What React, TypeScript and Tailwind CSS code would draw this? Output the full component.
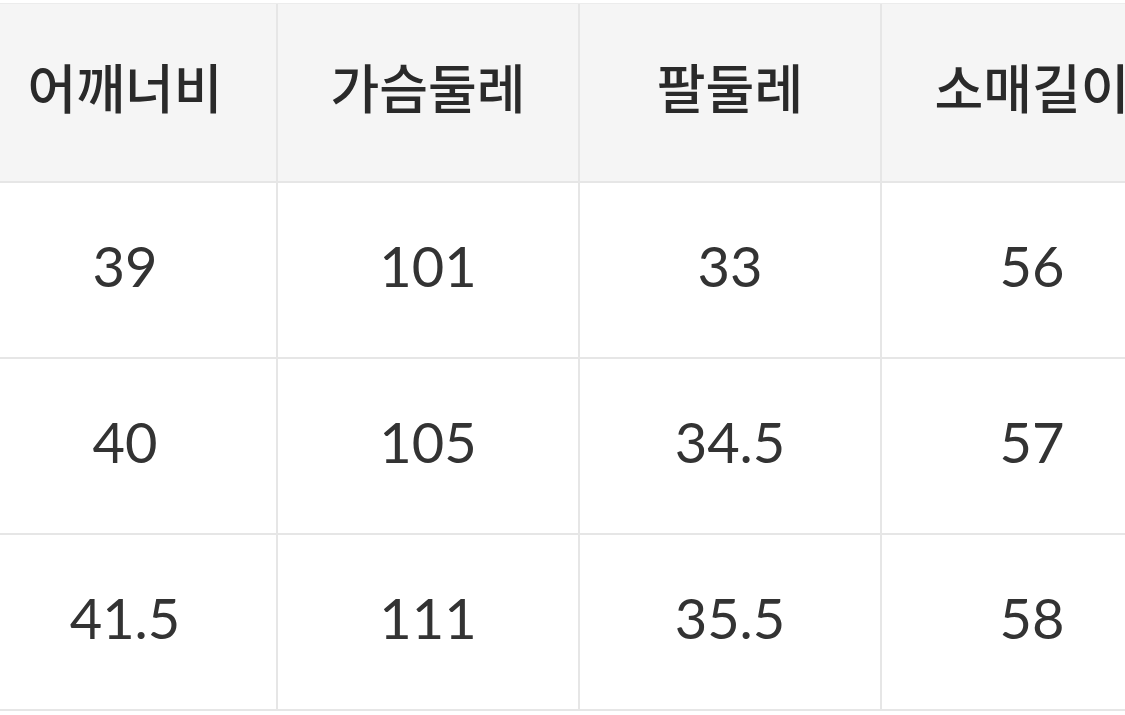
import React from "react";

const headers = ["어깨너비", "가슴둘레", "팔둘레", "소매길이"];
const rows = [
  ["39", "101", "33", "56"],
  ["40", "105", "34.5", "57"],
  ["41.5", "111", "35.5", "58"],
];

export default function App() {
  return (
    <div className="w-[1125px] h-[715px] overflow-hidden bg-white pt-[3px]">
      <div className="-ml-[26px] w-[1220px] border-t border-[#ececec]">
        <div className="flex h-[179px] bg-[#f5f5f5] border-b-2 border-[#e6e6e6]">
          {headers.map((h, i) => (
            <div
              key={h}
              className={
                "w-[302px] shrink-0 flex items-center justify-center pb-[12px] text-[53px] font-medium text-[#2a2a2a] font-['Noto_Sans_CJK_KR','Noto_Sans',sans-serif] " +
                (i > 0 ? "border-l-2 border-[#e6e6e6]" : "")
              }
            >
              {h}
            </div>
          ))}
        </div>
        {rows.map((r, ri) => (
          <div key={ri} className="flex h-[176px] border-b-2 border-[#e6e6e6]">
            {r.map((v, i) => (
              <div
                key={i}
                className={
                  "w-[302px] shrink-0 flex items-center justify-center pb-[8px] text-[56px] text-[#333333] font-['Lato',sans-serif] " +
                  (i > 0 ? "border-l-2 border-[#e6e6e6]" : "")
                }
              >
                {v}
              </div>
            ))}
          </div>
        ))}
      </div>
    </div>
  );
}
